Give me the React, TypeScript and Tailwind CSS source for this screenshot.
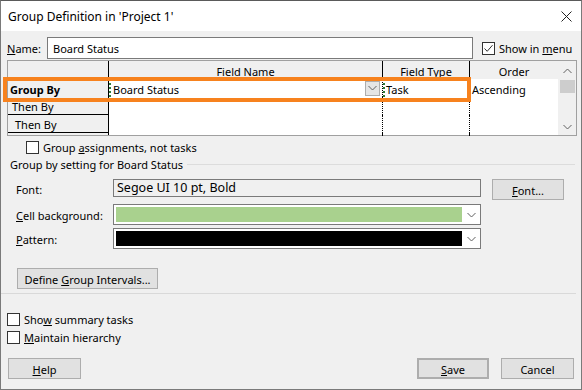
import type { ReactNode } from "react";

const font = "font-['Noto_Sans',sans-serif]";

function Chevron({ up = false }: { up?: boolean }) {
  return (
    <svg width="9" height="6" viewBox="0 0 9 6" className="shrink-0">
      <path
        d={up ? "M0.5 5 L4.5 1 L8.5 5" : "M0.5 1 L4.5 5 L8.5 1"}
        fill="none"
        stroke="#606060"
        strokeWidth="1"
      />
    </svg>
  );
}

function CheckBox({ checked = false }: { checked?: boolean }) {
  return (
    <div className="w-[13px] h-[13px] border border-[#333333] bg-white flex items-center justify-center shrink-0">
      {checked && (
        <svg width="11" height="11" viewBox="0 0 11 11">
          <path d="M1.5 5.5 L4.2 8.3 L9.5 2.2" fill="none" stroke="#333333" strokeWidth="1" />
        </svg>
      )}
    </div>
  );
}

function Btn({ children, className = "" }: { children: ReactNode; className?: string }) {
  return (
    <div
      className={`h-[21px] bg-[#e1e1e1] border border-[#adadad] flex items-center justify-center pt-[1px] text-black ${className}`}
    >
      {children}
    </div>
  );
}

function ColorCombo({ fill }: { fill: string }) {
  return (
    <div className="w-[368px] h-[21px] border border-[#7a7a7a] bg-white flex items-center pl-[2px]">
      <div className={`w-[346px] h-[15px] ${fill}`} />
      <div className="flex-1 flex items-center justify-center">
        <Chevron />
      </div>
    </div>
  );
}

// grid cell text sits a touch lower than flex centring puts it
const cell = "flex items-center pt-[2px]";

export default function App() {
  return (
    <div
      className={`relative w-[582px] h-[390px] border border-[#7a7a7a] border-t-[#5a5a5a] bg-[#f0f0f0] flex flex-col text-[11px] text-black leading-none ${font}`}
    >
      {/* title bar */}
      <div className="h-[30px] bg-white flex items-center justify-between pl-[7px] pr-[9px] shrink-0">
        <span className="text-[12px] pt-[1px]">Group Definition in 'Project 1'</span>
        <svg width="11" height="11" viewBox="0 0 11 11">
          <path d="M0.5 0.5 L10.5 10.5 M10.5 0.5 L0.5 10.5" stroke="#222" strokeWidth="1" />
        </svg>
      </div>

      {/* name row */}
      <div className="mt-[6px] h-[22px] flex items-center pl-[6px] shrink-0">
        <span className="w-[40px] pt-[1px]">
          <u>N</u>ame:
        </span>
        <div className="w-[426px] h-[22px] border border-[#7a7a7a] bg-white flex items-center pl-[5px] pt-[1px]">
          Board Status
        </div>
        <div className="ml-[9px] flex items-center gap-[4px]">
          <CheckBox checked />
          <span className="pt-[1px]">
            Show in <u>m</u>enu
          </span>
        </div>
      </div>

      {/* grid */}
      <div className="mt-[1px] ml-[6px] w-[570px] h-[76px] border border-[#a0a0a0] flex shrink-0 bg-[#f0f0f0]">
        <div className="w-[551px] flex flex-col">
          <div className="h-[18px] flex">
            <div className="w-[101px] border-r border-black" />
            <div className={`w-[274px] border-r border-black justify-center ${cell}`}>Field Name</div>
            <div className={`w-[87px] border-r border-black justify-center ${cell}`}>Field Type</div>
            <div className={`w-[88px] justify-center ${cell}`}>Order</div>
          </div>
          <div className="h-[18px] flex">
            <div className={`w-[101px] border-r border-black pl-[2px] font-bold ${cell}`}>Group By</div>
            <div className="w-[274px] bg-white border-l-2 border-l-[#2d7a3a] border-r border-dotted border-r-black flex items-center pl-[2px] pr-[2px]">
              <span className="flex-1 pt-[2px]">Board Status</span>
              <div className="w-[15px] h-[15px] border border-[#adadad] bg-[#e5e5e5] flex items-center justify-center">
                <Chevron />
              </div>
            </div>
            <div className={`w-[87px] bg-white border-l-2 border-l-[#2d7a3a] border-r border-dotted border-r-black pl-[1px] ${cell}`}>
              Task
            </div>
            <div className={`w-[88px] bg-white pl-[2px] ${cell}`}>Ascending</div>
          </div>
          {[0, 1].map((i) => (
            <div key={i} className="h-[18px] flex">
              <div
                className={`w-[101px] border-r border-black border-b border-b-black ${cell} ${
                  i === 0 ? "pl-[4px]" : "pl-[7px]"
                }`}
              >
                Then By
              </div>
              <div className="w-[274px] bg-white border-r border-dotted border-r-black" />
              <div className="w-[87px] bg-white border-r border-dotted border-r-black" />
              <div className="w-[88px] bg-white" />
            </div>
          ))}
          <div className="flex-1 flex">
            <div className="w-[101px] border-r border-black" />
            <div className="w-[274px] bg-white border-r border-dotted border-r-black" />
            <div className="w-[87px] bg-white border-r border-dotted border-r-black" />
            <div className="w-[88px] bg-white" />
          </div>
        </div>
        {/* scrollbar */}
        <div className="w-[17px] flex flex-col items-center bg-[#f0f0f0]">
          <div className="h-[19px] flex items-center justify-center">
            <Chevron up />
          </div>
          <div className="w-[15px] h-[13px] bg-[#cdcdcd]" />
          <div className="flex-1" />
          <div className="h-[17px] flex items-center justify-center">
            <Chevron />
          </div>
        </div>
      </div>

      {/* orange highlight over the Group By row */}
      <div className="absolute left-[2px] top-[76px] w-[468px] h-[25px] border-[4px] border-[#f7821e] pointer-events-none" />

      {/* group assignments */}
      <div className="mt-[4px] h-[14px] flex items-center pl-[25px] gap-[4px] shrink-0">
        <CheckBox />
        <span className="pt-[1px]">
          Group <u>a</u>ssignments, not tasks
        </span>
      </div>

      {/* group by setting heading */}
      <div className="mt-[2px] h-[16px] flex items-center pl-[9px] pr-[6px] shrink-0">
        <span className="pt-[1px]">Group by setting for Board Status</span>
        <div className="flex-1 h-px bg-[#dcdcdc] ml-[4px]" />
      </div>

      {/* font */}
      <div className="mt-[7px] h-[21px] flex items-start pl-[15px] shrink-0">
        <span className="w-[97px] h-[18px] flex items-center pt-[2px]">Font:</span>
        <div className="w-[368px] h-[18px] border border-[#7a7a7a] flex items-center pl-[3px] pt-[1px] text-[12.5px]">
          Segoe UI 10 pt, Bold
        </div>
        <Btn className="ml-[11px] w-[72px]">
          <span>
            <u>F</u>ont...
          </span>
        </Btn>
      </div>

      {/* cell background */}
      <div className="mt-[4px] h-[21px] flex items-center pl-[15px] shrink-0">
        <span className="w-[97px] pt-[1px]">
          <u>C</u>ell background:
        </span>
        <ColorCombo fill="bg-[#a9d18e]" />
      </div>

      {/* pattern */}
      <div className="mt-[3px] h-[21px] flex items-center pl-[15px] shrink-0">
        <span className="w-[97px] pt-[1px]">
          <u>P</u>attern:
        </span>
        <ColorCombo fill="bg-black" />
      </div>

      {/* define intervals */}
      <div className="mt-[19px] pl-[16px] shrink-0">
        <Btn className="w-[141px]">
          <span>
            Define <u>G</u>roup Intervals...
          </span>
        </Btn>
      </div>

      <div className="mt-[4px] h-px w-[575px] bg-[#d9d9d9] shrink-0" />

      {/* options */}
      <div className="mt-[18px] h-[14px] flex items-center pl-[6px] gap-[4px] shrink-0">
        <CheckBox />
        <span className="pt-[1px]">
          Sho<u>w</u> summary tasks
        </span>
      </div>
      <div className="mt-[4px] h-[14px] flex items-center pl-[6px] gap-[4px] shrink-0">
        <CheckBox />
        <span className="pt-[1px]">
          <u>M</u>aintain hierarchy
        </span>
      </div>

      {/* footer buttons */}
      <div className="mt-[14px] flex items-center pl-[7px] pr-[7px] shrink-0">
        <Btn className="w-[73px]">
          <span>
            <u>H</u>elp
          </span>
        </Btn>
        <div className="flex-1" />
        <Btn className="w-[72px] border-2 border-[#0078d7]">
          <span>
            <u>S</u>ave
          </span>
        </Btn>
        <Btn className="ml-[12px] w-[73px]">Cancel</Btn>
      </div>
    </div>
  );
}
